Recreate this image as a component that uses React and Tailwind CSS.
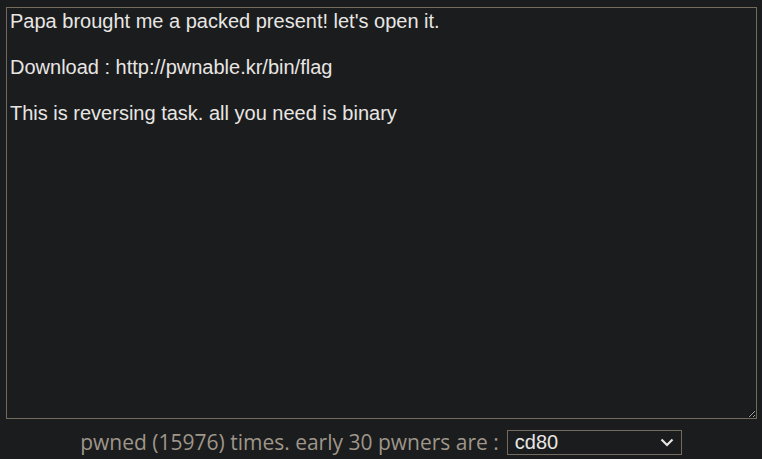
import { useState } from 'react'

const TASK_TEXT = `Papa brought me a packed present! let's open it.

Download : http://pwnable.kr/bin/flag

This is reversing task. all you need is binary`

function Footer() {
  const [pick, setPick] = useState('cd80')
  return (
    <div className="flex items-center justify-center gap-[8px] mt-[10px]">
      <span className="text-[21px] leading-[26px] text-[#9e9689] font-['Open_Sans',sans-serif]">
        pwned (15976) times. early 30 pwners are :
      </span>
      <div className="relative">
        <select
          value={pick}
          onChange={(e) => setPick(e.target.value)}
          className="appearance-none w-[175px] h-[25px] pl-[7px] bg-[#1b1c1e] border border-[#736b5e] text-[#e8e6e3] text-[20px] leading-[23px] font-['Liberation_Sans',Arial,sans-serif] outline-none"
        >
          <option>cd80</option>
          <option>hypwnlab</option>
          <option>badcob</option>
        </select>
        <svg
          className="absolute right-[8px] top-[8px] pointer-events-none"
          width="14"
          height="9"
          viewBox="0 0 14 9"
          fill="none"
          stroke="#e8e6e3"
          strokeWidth="2.2"
        >
          <path d="M1.5 1.5 L7 7 L12.5 1.5" />
        </svg>
      </div>
    </div>
  )
}

export default function App() {
  return (
    <div className="min-h-screen bg-[#1b1c1e] pt-[7px] px-[6px]">
      <textarea
        readOnly
        value={TASK_TEXT}
        className="block w-[751px] h-[412px] px-[3px] py-[2px] bg-[#1b1c1e] border border-[#736b5e] text-[#e8e6e3] text-[20px] leading-[23px] font-['Liberation_Sans',Arial,sans-serif] outline-none"
      />
      <Footer />
    </div>
  )
}
